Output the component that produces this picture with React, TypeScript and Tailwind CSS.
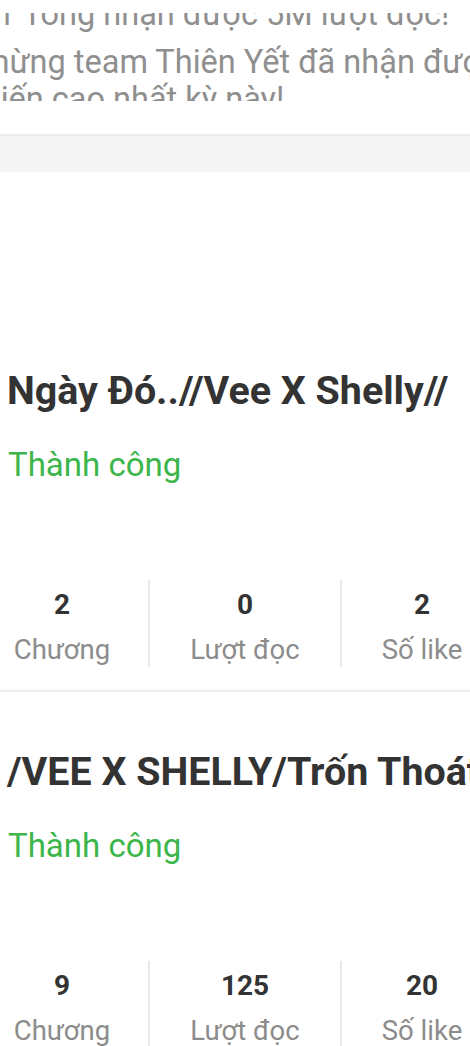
import React from 'react'

const stories = [
  { title: 'Ngày Đó..//Vee X Shelly//', status: 'Thành công', chapters: '2', reads: '0', likes: '2' },
  { title: '/VEE X SHELLY/Trốn Thoát', status: 'Thành công', chapters: '9', reads: '125', likes: '20' },
]

function StoryItem({ story }: { story: (typeof stories)[number] }) {
  return (
    <div className="border-b-2 border-[#eeeeee] pt-[57px] pb-[23px]">
      <h2 className="whitespace-nowrap pl-[7px] text-[39.4px] font-bold leading-[46px] text-[#333333]">{story.title}</h2>
      <p className="mt-[31px] whitespace-nowrap pl-[8px] text-[33px] leading-[40px] text-[#3cb54a]">{story.status}</p>
      <div className="mt-[95px] flex">
        <div className="flex w-[148px] shrink-0 flex-col items-center pt-[8px] pr-[24px]">
          <span className="text-[28px] font-bold leading-[34px] text-[#333333]">{story.chapters}</span>
          <span className="mt-[11px] text-[27.5px] leading-[34px] text-[#8c8c8c]">Chương</span>
        </div>
        <div className="flex w-[192px] shrink-0 flex-col items-center border-l-2 border-[#e8e8e8] pt-[8px]">
          <span className="text-[28px] font-bold leading-[34px] text-[#333333]">{story.reads}</span>
          <span className="mt-[11px] text-[27.5px] leading-[34px] text-[#8c8c8c]">Lượt đọc</span>
        </div>
        <div className="flex w-[162px] shrink-0 flex-col items-center border-l-2 border-[#e8e8e8] pt-[8px]">
          <span className="text-[28px] font-bold leading-[34px] text-[#333333]">{story.likes}</span>
          <span className="mt-[11px] text-[27.5px] leading-[34px] text-[#8c8c8c]">Số like</span>
        </div>
      </div>
    </div>
  )
}

export default function App() {
  return (
    <div className="h-[1046px] w-[470px] overflow-hidden bg-white font-['Roboto',sans-serif]">
      {/* announcement text, clipped above and below */}
      <div className="mt-[13px] h-[88px] overflow-hidden">
        <div className="-mt-[17px] text-[32.5px] leading-[37px] text-[#8f8f8f]">
          <div className="-ml-[3px] mb-[11px] whitespace-nowrap">1 Tổng nhận được 5M lượt đọc!</div>
          <div className="-ml-[19px] whitespace-nowrap">mừng team Thiên Yết đã nhận được</div>
          <div className="-ml-[10px] whitespace-nowrap">tiến cao nhất kỳ này!</div>
        </div>
      </div>
      <div className="mt-[33px] h-[38px] border-t-2 border-[#ececec] bg-[#f5f5f5]" />
      <div className="h-[139px]" />
      {stories.map((s) => (
        <StoryItem key={s.title} story={s} />
      ))}
    </div>
  )
}
